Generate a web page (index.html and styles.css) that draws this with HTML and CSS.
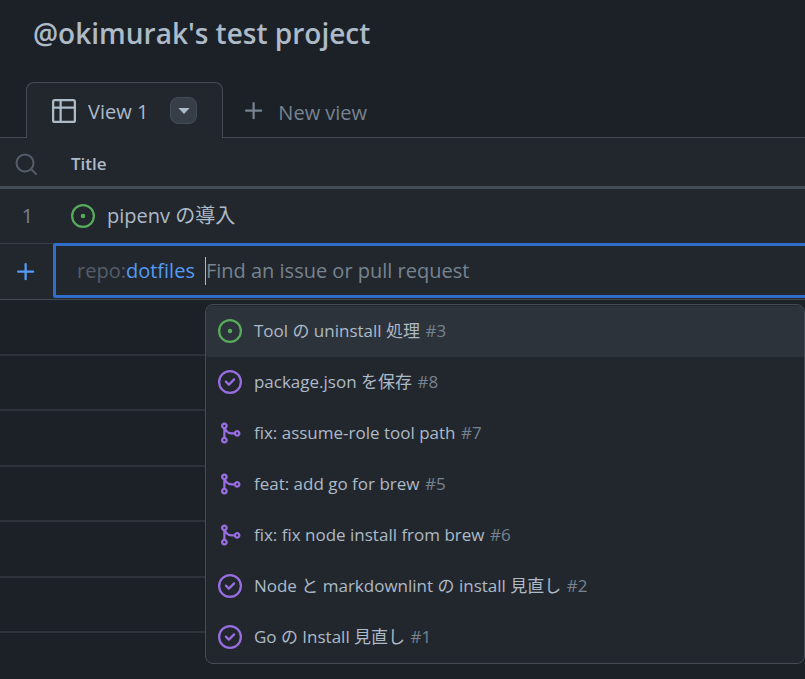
FILE: index.html
```html
<!DOCTYPE html>
<html lang="en">
<head>
<meta charset="utf-8">
<meta name="viewport" content="width=device-width, initial-scale=1">
<title>@okimurak's test project</title>
<link rel="stylesheet" href="styles.css">
</head>
<body>
<svg class="sprite" aria-hidden="true">
  <symbol id="open" viewBox="0 0 16 16"><path d="M8 9.5a1.5 1.5 0 100-3 1.5 1.5 0 000 3z"/><path fill-rule="evenodd" d="M8 0a8 8 0 100 16A8 8 0 008 0zM1.500 8a6.500 6.500 0 1113 0 6.500 6.500 0 01-13 0z"/></symbol>
  <symbol id="closed" viewBox="0 0 16 16"><path d="M11.280 6.780a.75.75 0 00-1.060-1.060L7.250 8.690 5.780 7.220a.75.75 0 00-1.060 1.060l2 2a.75.75 0 001.060 0l3.500-3.500z"/><path fill-rule="evenodd" d="M16 8A8 8 0 110 8a8 8 0 0116 0zm-1.500 0a6.500 6.500 0 11-13 0 6.500 6.500 0 0113 0z"/></symbol>
  <symbol id="merge" viewBox="0 0 16 16"><path fill-rule="evenodd" d="M5 3.254V3.250v.005a.75.75 0 110-.005v.004zm.45 1.900a2.250 2.250 0 10-1.950.218v5.256a2.250 2.250 0 101.500 0V7.123A5.735 5.735 0 009.250 9h1.378a2.251 2.251 0 100-1.500H9.250a4.250 4.250 0 01-3.800-2.346zM12.750 9a.75.75 0 100-1.500.75.75 0 000 1.500zm-8.500 4.500a.75.75 0 100-1.500.75.75 0 000 1.500z"/></symbol>
  <symbol id="plus" viewBox="0 0 16 16"><path d="M7.750 2a.75.75 0 01.75.75V7h4.250a.75.75 0 010 1.500H8.500v4.250a.75.75 0 01-1.500 0V8.500H2.750a.75.75 0 010-1.500H7V2.750A.75.75 0 017.750 2z"/></symbol>
</svg>

<header class="page-header"><h1>@okimurak's test project</h1></header>

<nav class="tabs" aria-label="Views">
  <div class="tab">
    <a class="tab-link" href="#view-1">
      <svg class="icon" viewBox="0 0 16 16" aria-hidden="true"><path fill-rule="evenodd" d="M0 1.750C0 .784.784 0 1.750 0h12.500C15.216 0 16 .784 16 1.750v12.500A1.750 1.750 0 0114.250 16H1.750A1.750 1.750 0 010 14.250V1.750zM1.500 6.500v7.750c0 .138.112.25.25.25H5v-8H1.500zM5 5V1.500H1.750a.25.25 0 00-.25.25V5H5zm1.500 1.500v8h7.750a.25.25 0 00.25-.25V6.500h-8zm8-1.500V1.750a.25.25 0 00-.25-.25H6.500V5h8z"/></svg>
      <span class="tab-label">View 1</span>
    </a>
    <button class="tab-menu" type="button" aria-label="View options">
      <svg viewBox="0 0 12 6" aria-hidden="true"><path d="M.4 0h11.200L6 6z"/></svg>
    </button>
  </div>
  <button class="new-view" type="button"><svg class="icon" aria-hidden="true"><use href="#plus"/></svg><span class="tab-label">New view</span></button>
</nav>

<main>
  <table class="board" id="view-1">
    <thead>
      <tr>
        <th class="gutter"><button class="icon-button search" type="button" aria-label="Search"><svg class="icon" viewBox="0 0 24 24" aria-hidden="true"><circle cx="11" cy="11" r="8.500"/><path d="M17.500 17.500l4.500 4.500"/></svg></button></th>
        <th class="title" scope="col">Title</th>
      </tr>
    </thead>
    <tbody>
      <tr>
        <td class="gutter number">1</td>
        <td class="title"><div class="issue"><svg class="icon green" aria-hidden="true"><use href="#open"/></svg><span lang="ja">pipenv の導入</span></div></td>
      </tr>
      <tr class="add-row">
        <td class="gutter"><button class="icon-button add" type="button" aria-label="Add item"><svg class="icon" aria-hidden="true"><use href="#plus"/></svg></button></td>
        <td class="entry-cell">
          <div class="entry">
            <label for="find" class="scope">repo:<b>dotfiles</b></label>
            <div class="finder">
              <input id="find" type="text" placeholder="Find an issue or pull request" autocomplete="off">
              <ul class="suggestions" lang="ja">
                <li class="active"><svg class="icon green" aria-hidden="true"><use href="#open"/></svg><span>Tool の uninstall 処理 <small>#3</small></span></li>
                <li><svg class="icon" aria-hidden="true"><use href="#closed"/></svg><span>package.json を保存 <small>#8</small></span></li>
                <li><svg class="icon" aria-hidden="true"><use href="#merge"/></svg><span>fix: assume-role tool path <small>#7</small></span></li>
                <li><svg class="icon" aria-hidden="true"><use href="#merge"/></svg><span>feat: add go for brew <small>#5</small></span></li>
                <li><svg class="icon" aria-hidden="true"><use href="#merge"/></svg><span>fix: fix node install from brew <small>#6</small></span></li>
                <li><svg class="icon" aria-hidden="true"><use href="#closed"/></svg><span>Node と markdownlint の install 見直し <small>#2</small></span></li>
                <li><svg class="icon" aria-hidden="true"><use href="#closed"/></svg><span>Go の Install 見直し <small>#1</small></span></li>
              </ul>
            </div>
          </div>
        </td>
      </tr>
    </tbody>
  </table>
  <div class="empty-rows" aria-hidden="true"><div></div><div></div><div></div><div></div><div></div><div></div></div>
</main>
</body>
</html>
```
FILE: styles.css
```css
:root {
  --inset: #1c2128;
  --canvas: #22272e;
  --border: #444c56;
  --border-muted: #373e47;
  --text: #adbac7;
  --muted: #768390;
  --subtle: #545d68;
  --accent: #539bf5;
  --accent-strong: #316dca;
  --green: #57ab5a;
  --purple: #986ee2;
}

* { box-sizing: border-box; }

body {
  margin: 0;
  min-height: 100vh;
  overflow-x: hidden;
  background: var(--inset);
  color: var(--text);
  font-family: "Open Sans", "Noto Sans CJK JP", sans-serif;
  font-size: 20px;
  line-height: 28px;
}

button, input { font: inherit; color: inherit; }
button { background: none; border: 0; padding: 0; cursor: pointer; }

.sprite { position: absolute; width: 0; height: 0; }
.icon { display: block; flex: none; width: 24px; height: 24px; fill: currentColor; }
.green { color: var(--green); }

.page-header { padding: 15px 33px 31px; }
h1 { margin: 0; font-size: 28px; line-height: 36px; font-weight: 600; }

.tabs {
  display: flex;
  padding-left: 26px;
  height: 56px;
  box-shadow: inset 0 -1px var(--border);
}
.tab {
  display: flex;
  align-items: center;
  gap: 22px;
  padding: 0 25px;
  border: 1px solid var(--border);
  border-bottom: 0;
  border-radius: 8px 8px 0 0;
  background: var(--canvas);
}
.tab-link {
  display: flex;
  align-items: center;
  gap: 12px;
  color: inherit;
  text-decoration: none;
}
.tab-label { padding-top: 3px; }
.tab-menu {
  display: grid;
  place-items: center;
  width: 27px;
  height: 27px;
  border: 1px solid var(--border);
  border-radius: 8px;
  background: #373e47;
}
.tab-menu svg { width: 12px; height: 6px; fill: currentColor; }
.new-view {
  display: flex;
  align-items: center;
  gap: 12px;
  margin-left: 19px;
  padding-top: 2px;
  color: var(--muted);
}

.board {
  width: 100%;
  border-collapse: separate;
  border-spacing: 0;
  table-layout: fixed;
  background: var(--canvas);
}
.board th, .board td { padding: 0; text-align: left; }
.board th { height: 51px; padding-top: 3px; border-bottom: 3px solid var(--border); font-size: 17px; font-weight: 600; }
.board td { height: 55px; border-bottom: 1px solid var(--border-muted); }
.board .add-row td { height: 56px; border-color: var(--border); }
.board .gutter { width: 53px; padding-right: 2px; color: var(--muted); text-align: center; }
.board .number { padding: 0 0 0 2px; }
.board .title { padding-left: 18px; }
.issue { display: flex; align-items: center; gap: 12px; }

.icon-button { display: block; margin: 0 auto; }
.search { color: var(--subtle); }
.search .icon { fill: none; stroke: currentColor; stroke-width: 2; stroke-linecap: round; }
.add { color: var(--accent); }

.entry-cell { vertical-align: top; }
.entry {
  display: flex;
  align-items: center;
  height: 55px;
  margin-top: -1px;
  padding-left: 21px;
  border: 3px solid var(--accent-strong);
  border-right: 0;
  border-radius: 3px 0 0 3px;
  background: var(--canvas);
}
.scope { margin-right: 10px; color: var(--subtle); }
.scope b { color: var(--accent); font-weight: 400; }
.finder { position: relative; flex: 1; }
.finder input {
  display: block;
  width: 100%;
  height: 28px;
  padding: 0;
  border: 0;
  border-left: 1px solid var(--text);
  outline: 0;
  background: none;
}
.finder input::placeholder { color: var(--muted); opacity: 1; }

.suggestions {
  position: absolute;
  top: 47px;
  left: 0;
  right: 0;
  margin: 0;
  padding: 1px 0 0;
  overflow: hidden;
  list-style: none;
  border: 1px solid var(--border);
  border-radius: 8px;
  background: var(--canvas);
  font-size: 17px;
}
.suggestions li {
  display: flex;
  align-items: center;
  gap: 12px;
  height: 51px;
  padding: 0 12px;
  white-space: nowrap;
}
.suggestions .active { background: #2d333b; }
.suggestions .icon { color: var(--purple); }
.suggestions .icon.green { color: var(--green); }
.suggestions small { margin-left: 1px; font-size: inherit; color: var(--muted); }

.empty-rows div { height: 55px; border-bottom: 2px solid #2d333b; }
.empty-rows div:nth-child(odd) { height: 56px; }
```
